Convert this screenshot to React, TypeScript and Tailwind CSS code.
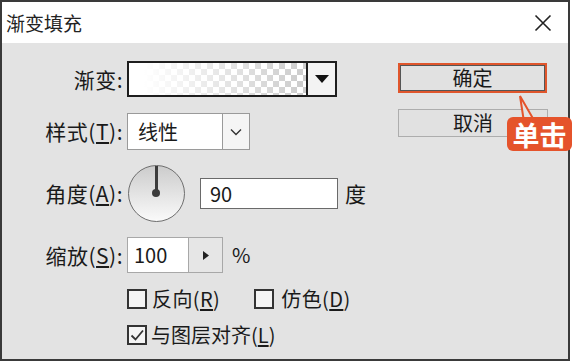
import React from "react";

function Checkbox({ checked }: { checked?: boolean }) {
  return (
    <div className="w-[20px] h-[20px] border-2 border-[#333] bg-[#f4f4f4] flex items-center justify-center">
      {checked && (
        <svg width="16" height="16" viewBox="0 0 16 16">
          <path d="M2.5 8.5 L6.5 12.5 L14 3.5" fill="none" stroke="#333" strokeWidth="1.8" />
        </svg>
      )}
    </div>
  );
}

export default function App() {
  return (
    <div className="w-[577px] h-[361px] bg-white overflow-hidden text-[#1a1a1a] font-['Noto_Sans_CJK_SC','Noto_Sans',sans-serif]">
      <div className="relative w-[570px] h-[361px] border-2 border-[#3a3a3a] flex flex-col">
        {/* title bar */}
        <div className="h-[41px] bg-white flex items-center justify-between pl-[4px] pr-[16px]">
          <span className="text-[19px] leading-none text-[#222]">渐变填充</span>
          <svg width="18" height="18" viewBox="0 0 18 18">
            <path d="M1.5 1.5 L16.5 16.5 M16.5 1.5 L1.5 16.5" stroke="#222" strokeWidth="1.6" />
          </svg>
        </div>
        {/* body */}
        <div className="flex-1 bg-[#e3e3e3] flex">
          <div className="w-[396px] pt-[18px] flex flex-col text-[20px] leading-none">
            {/* row 1 */}
            <div className="h-[36px] flex items-center">
              <div className="w-[121px] text-right text-[21px] tracking-[0.5px]">渐变:</div>
              <div className="ml-[4px] w-[210px] h-[36px] border-2 border-[#1e1e1e] flex">
                <div className="flex-1 bg-[linear-gradient(to_right,#ffffff_8%,rgba(255,255,255,0.1)_100%),conic-gradient(#c6c6c6_25%,#ffffff_0_50%,#c6c6c6_0_75%,#ffffff_0)] [background-size:100%_100%,12px_12px]" />
                <div className="w-[29px] border-l-2 border-[#1e1e1e] bg-[#f3f3f3] flex items-center justify-center">
                  <svg width="14" height="8" viewBox="0 0 14 8">
                    <path d="M0 0 L14 0 L7 8 Z" fill="#111" />
                  </svg>
                </div>
              </div>
            </div>
            {/* row 2 */}
            <div className="h-[37px] mt-[16px] flex items-center">
              <div className="w-[121px] text-right text-[21px] tracking-[0.5px]">样式(<span className="underline underline-offset-2">T</span>):</div>
              <div className="ml-[4px] w-[123px] h-[37px] border border-[#9a9a9a] bg-white flex">
                <div className="flex-1 flex items-center pl-[10px]">线性</div>
                <div className="w-[27px] border-l border-[#9a9a9a] bg-[#f5f5f5] flex items-center justify-center">
                  <svg width="12" height="8" viewBox="0 0 12 8">
                    <path d="M1 1.5 L6 6.5 L11 1.5" fill="none" stroke="#333" strokeWidth="1.4" />
                  </svg>
                </div>
              </div>
            </div>
            {/* row 3 */}
            <div className="h-[57px] mt-[15px] flex items-center">
              <div className="w-[121px] text-right text-[21px] tracking-[0.5px]">角度(<span className="underline underline-offset-2">A</span>):</div>
              <div className="ml-[5px] w-[57px] h-[57px] rounded-full border-[1.5px] border-[#6e6e6e] bg-[linear-gradient(to_bottom,#cccccc,#fafafa)] flex justify-center relative">
                <div className="w-[3px] h-[27px] bg-[#3c3c3c]" />
                <div className="absolute left-[23px] top-[23px] w-[8px] h-[8px] rounded-full bg-[#3c3c3c]" />
              </div>
              <div className="ml-[15px] w-[138px] h-[31px] border border-[#6a6a6a] bg-white flex items-center pl-[9px]">90</div>
              <div className="ml-[7px] text-[21px]">度</div>
            </div>
            {/* row 4 */}
            <div className="h-[36px] mt-[15px] flex items-center">
              <div className="w-[121px] text-right text-[21px] tracking-[0.5px]">缩放(<span className="underline underline-offset-2">S</span>):</div>
              <div className="ml-[4px] w-[96px] h-[36px] border border-[#a8a8a8] flex">
                <div className="w-[60px] bg-white flex items-center pl-[6px]">100</div>
                <div className="flex-1 border-l border-[#a8a8a8] bg-[#e6e6e6] flex items-center justify-center">
                  <svg width="6" height="9" viewBox="0 0 6 9">
                    <path d="M0 0 L6 4.5 L0 9 Z" fill="#222" />
                  </svg>
                </div>
              </div>
              <div className="ml-[9px]">%</div>
            </div>
            {/* row 5 */}
            <div className="h-[20px] mt-[16px] flex items-center pl-[125px] tracking-[0.4px]">
              <Checkbox />
              <div className="ml-[5px]">反向(<span className="underline underline-offset-2">R</span>)</div>
              <div className="ml-[34px]"><Checkbox /></div>
              <div className="ml-[7px]">仿色(<span className="underline underline-offset-2">D</span>)</div>
            </div>
            {/* row 6 */}
            <div className="h-[20px] mt-[16px] flex items-center pl-[125px]">
              <Checkbox checked />
              <div className="ml-[4px]">与图层对齐(<span className="underline underline-offset-2">L</span>)</div>
            </div>
          </div>
          {/* right column */}
          <div className="pt-[20px] flex flex-col text-[20px] leading-none">
            <div className="w-[149px] h-[30px] border-2 border-[#e0562c] bg-[#e1e1e1]">
              <div className="w-full h-full border border-[#555] flex items-center justify-center">确定</div>
            </div>
            <div className="w-[150px] h-[28px] mt-[16px] border border-[#adadad] bg-[#e1e1e1] flex items-center justify-center">取消</div>
          </div>
        </div>
        {/* callout badge */}
        <svg className="absolute left-[513px] top-[92px]" width="26" height="30" viewBox="0 0 26 30">
          <path d="M5 2 L20 28 L9 28 Z" fill="#e3e3e3" stroke="#e5532b" strokeWidth="2" />
        </svg>
        <div className="absolute left-[505px] top-[115px] w-[65px] h-[34px] rounded-[6px] bg-[#e5532b] text-white font-bold text-[27px] leading-none flex items-center justify-center">单击</div>
      </div>
    </div>
  );
}
